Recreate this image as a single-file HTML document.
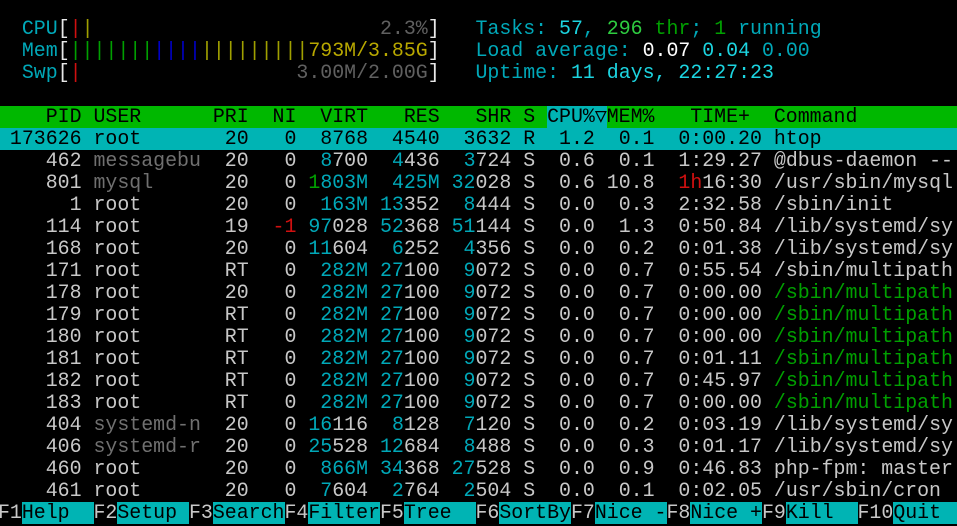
<!DOCTYPE html>
<html><head><meta charset="utf-8"><style>
html,body{margin:0;padding:0;background:#000;width:957px;height:526px;overflow:hidden}
#t{position:absolute;left:-2px;top:18px;width:961px;font-family:"Liberation Mono","DejaVu Sans Mono",monospace;font-size:19.9px;color:#c8c8c8}
#t div{height:22px;line-height:22px;white-space:pre;overflow:hidden}
.c{color:#00a8b8}.C{color:#1cd4e0}.g{color:#00a000}.G{color:#2ecc40}.r{color:#d01010}.d{color:#707070}
.m{color:#b8a800}.b{color:#0000c8}.y{color:#a0a000}.w{color:#e8e8e8}.k{color:#606060}.W{color:#ffffff}
.hd{background:#00b800;color:#000}
.sel{background:#00b4b4;color:#000}
.s{background:#00b4b4}
.tri{display:inline-block;width:1ch;text-align:center;overflow:hidden;vertical-align:top}
.f{background:#00b4b4;color:#000}
</style></head><body><div id="t">
<div>  <span class="c">CPU</span><span class="w">[</span><span class="r">|</span><span class="y">|</span>                        <span class="k">2.3%</span><span class="w">]</span>   <span class="c">Tasks: </span><span class="C">57</span><span class="c">, </span><span class="G">296</span><span class="g"> thr</span><span class="c">; </span><span class="g">1</span><span class="c"> running</span></div>
<div>  <span class="c">Mem</span><span class="w">[</span><span class="g">|||||||</span><span class="b">||||</span><span class="y">|||||||||</span><span class="m">793M/3.85G</span><span class="w">]</span>   <span class="c">Load average: </span><span class="W">0.07 </span><span class="C">0.04 </span><span class="c">0.00</span></div>
<div>  <span class="c">Swp</span><span class="w">[</span><span class="r">|</span>                  <span class="k">3.00M/2.00G</span><span class="w">]</span>   <span class="c">Uptime: </span><span class="C">11 days, 22:27:23</span></div>
<div> </div>
<div class="hd">    PID USER      PRI  NI  VIRT   RES   SHR S <span class="s">CPU%<span class="tri">▽</span></span>MEM%   TIME+  Command</div>
<div class="sel"> 173626 root       20   0  8768  4540  3632 R  1.2  0.1  0:00.20 htop</div>
<div>    462 <span class="d">messagebu</span>  20   0  <span class="c">8</span>700  <span class="c">4</span>436  <span class="c">3</span>724 S  0.6  0.1  1:29.27 @dbus-daemon --</div>
<div>    801 <span class="d">mysql    </span>  20   0 <span class="g">1</span><span class="c">803M</span>  <span class="c">425M</span> <span class="c">32</span>028 S  0.6 10.8  <span class="r">1h</span>16:30 /usr/sbin/mysql</div>
<div>      1 root       20   0  <span class="c">163M</span> <span class="c">13</span>352  <span class="c">8</span>444 S  0.0  0.3  2:32.58 /sbin/init</div>
<div>    114 root       19  <span class="r">-1</span> <span class="c">97</span>028 <span class="c">52</span>368 <span class="c">51</span>144 S  0.0  1.3  0:50.84 /lib/systemd/sy</div>
<div>    168 root       20   0 <span class="c">11</span>604  <span class="c">6</span>252  <span class="c">4</span>356 S  0.0  0.2  0:01.38 /lib/systemd/sy</div>
<div>    171 root       RT   0  <span class="c">282M</span> <span class="c">27</span>100  <span class="c">9</span>072 S  0.0  0.7  0:55.54 /sbin/multipath</div>
<div>    178 root       20   0  <span class="c">282M</span> <span class="c">27</span>100  <span class="c">9</span>072 S  0.0  0.7  0:00.00 <span class="g">/sbin/multipath</span></div>
<div>    179 root       RT   0  <span class="c">282M</span> <span class="c">27</span>100  <span class="c">9</span>072 S  0.0  0.7  0:00.00 <span class="g">/sbin/multipath</span></div>
<div>    180 root       RT   0  <span class="c">282M</span> <span class="c">27</span>100  <span class="c">9</span>072 S  0.0  0.7  0:00.00 <span class="g">/sbin/multipath</span></div>
<div>    181 root       RT   0  <span class="c">282M</span> <span class="c">27</span>100  <span class="c">9</span>072 S  0.0  0.7  0:01.11 <span class="g">/sbin/multipath</span></div>
<div>    182 root       RT   0  <span class="c">282M</span> <span class="c">27</span>100  <span class="c">9</span>072 S  0.0  0.7  0:45.97 <span class="g">/sbin/multipath</span></div>
<div>    183 root       RT   0  <span class="c">282M</span> <span class="c">27</span>100  <span class="c">9</span>072 S  0.0  0.7  0:00.00 <span class="g">/sbin/multipath</span></div>
<div>    404 <span class="d">systemd-n</span>  20   0 <span class="c">16</span>116  <span class="c">8</span>128  <span class="c">7</span>120 S  0.0  0.2  0:03.19 /lib/systemd/sy</div>
<div>    406 <span class="d">systemd-r</span>  20   0 <span class="c">25</span>528 <span class="c">12</span>684  <span class="c">8</span>488 S  0.0  0.3  0:01.17 /lib/systemd/sy</div>
<div>    460 root       20   0  <span class="c">866M</span> <span class="c">34</span>368 <span class="c">27</span>528 S  0.0  0.9  0:46.83 php-fpm: master</div>
<div>    461 root       20   0  <span class="c">7</span>604  <span class="c">2</span>764  <span class="c">2</span>504 S  0.0  0.1  0:02.05 /usr/sbin/cron</div>
<div>F1<span class="f">Help  </span>F2<span class="f">Setup </span>F3<span class="f">Search</span>F4<span class="f">Filter</span>F5<span class="f">Tree  </span>F6<span class="f">SortBy</span>F7<span class="f">Nice -</span>F8<span class="f">Nice +</span>F9<span class="f">Kill  </span>F10<span class="f">Quit  </span></div>
</div></body></html>
